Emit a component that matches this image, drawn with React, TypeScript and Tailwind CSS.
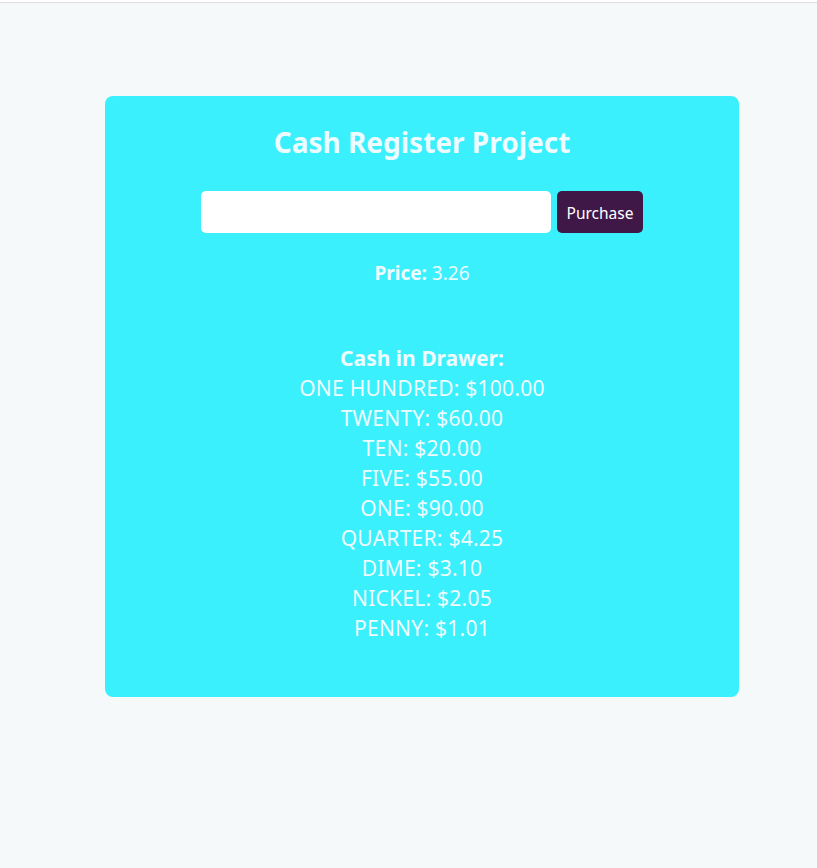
import React from "react";

const drawer: [string, string][] = [
  ["ONE HUNDRED", "$100.00"],
  ["TWENTY", "$60.00"],
  ["TEN", "$20.00"],
  ["FIVE", "$55.00"],
  ["ONE", "$90.00"],
  ["QUARTER", "$4.25"],
  ["DIME", "$3.10"],
  ["NICKEL", "$2.05"],
  ["PENNY", "$1.01"],
];

export default function App() {
  return (
    <div
      className="min-h-[868px] w-full bg-[#f5f9f9]"
      style={{ fontFamily: '"Noto Sans", "Open Sans", sans-serif' }}
    >
      <div className="h-[3px] border-b border-[#dedede] bg-white" />
      <div className="flex pl-[105px] pt-[93px]">
        <div className="flex h-[601px] w-[634px] flex-col items-center rounded-[8px] bg-[#3af0fd] pt-[26px] text-[#eefcff]">
          <h1 className="h-[40px] text-[28px] font-bold leading-[40px]">Cash Register Project</h1>
          <div className="mt-[29px] flex gap-[6px]">
            <input className="h-[42px] w-[350px] rounded-[5px] bg-white outline-none" />
            <button className="h-[42px] w-[86px] rounded-[5px] bg-[#3f1848] pt-[3px] text-[15.5px] text-white">
              Purchase
            </button>
          </div>
          <p className="mt-[28px] text-[19px] leading-[24px]">
            <span className="font-bold">Price:</span> 3.26
          </p>
          <div className="mt-[58px] flex flex-col items-center text-[21px] leading-[30px] tracking-[0.25px]">
            <p className="font-bold tracking-normal">Cash in Drawer:</p>
            {drawer.map(([k, v]) => (
              <p key={k}>
                {k}: {v}
              </p>
            ))}
          </div>
        </div>
      </div>
    </div>
  );
}
